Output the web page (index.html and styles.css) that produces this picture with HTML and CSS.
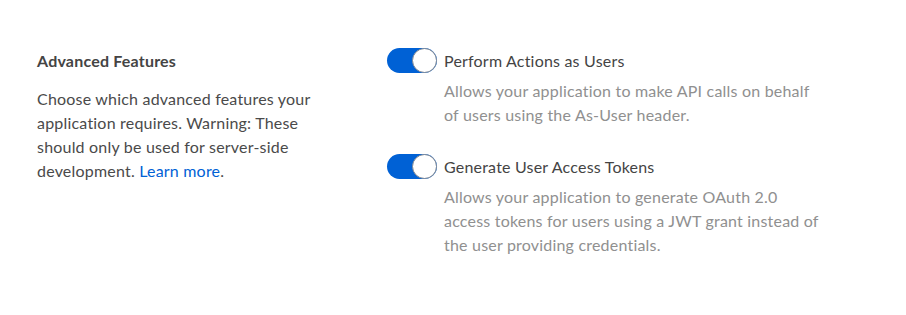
FILE: index.html
```html
<!DOCTYPE html>
<html>
<head>
<meta charset="utf-8">
<link rel="stylesheet" href="styles.css">
</head>
<body>
<div class="section">
  <div class="intro">
    <h3 class="title">Advanced Features</h3>
    <p class="intro-text">Choose which advanced features your application requires. Warning: These should only be used for server-side development. <a class="link" href="#">Learn more</a>.</p>
  </div>
  <div class="options">
    <div class="option">
      <div class="option-head">
        <span class="toggle"><span class="knob"></span></span>
        <span class="option-label">Perform Actions as Users</span>
      </div>
      <p class="option-desc">Allows your application to make API calls on behalf of users using the As-User header.</p>
    </div>
    <div class="option">
      <div class="option-head">
        <span class="toggle"><span class="knob"></span></span>
        <span class="option-label">Generate User Access Tokens</span>
      </div>
      <p class="option-desc">Allows your application to generate OAuth 2.0 access tokens for users using a JWT grant instead of the user providing credentials.</p>
    </div>
  </div>
</div>
</body>
</html>
```
FILE: styles.css
```css
html, body {
  margin: 0;
  padding: 0;
  background: #fff;
}
body {
  font-family: Lato, "Open Sans", sans-serif;
  font-size: 16px;
  letter-spacing: 0.2px;
  line-height: 24px;
  color: #4a4a4a;
}
.section {
  display: flex;
  padding: 48px 0 0 37px;
}
.intro {
  width: 282px;
  margin-right: 68px;
}
.title {
  margin: 0;
  font-size: 16px;
  font-weight: 700;
  line-height: 25px;
  color: #444;
}
.intro-text {
  margin: 14px 0 0;
}
.link {
  color: #0061d5;
  text-decoration: none;
}
.options {
  display: flex;
  flex-direction: column;
  gap: 27px;
}
.option-head {
  display: flex;
  align-items: center;
  gap: 7px;
  height: 25px;
}
.toggle {
  position: relative;
  display: block;
  width: 50px;
  height: 25px;
  border-radius: 13px;
  background: #0061d5;
}
.knob {
  position: absolute;
  right: 0;
  top: 0;
  width: 23px;
  height: 23px;
  border-radius: 50%;
  background: #fff;
  border: 1px solid #7d8693;
}
.option-label {
  color: #444;
}
.option-desc {
  margin: 6px 0 0 57px;
  width: 376px;
  color: #909090;
}
```
